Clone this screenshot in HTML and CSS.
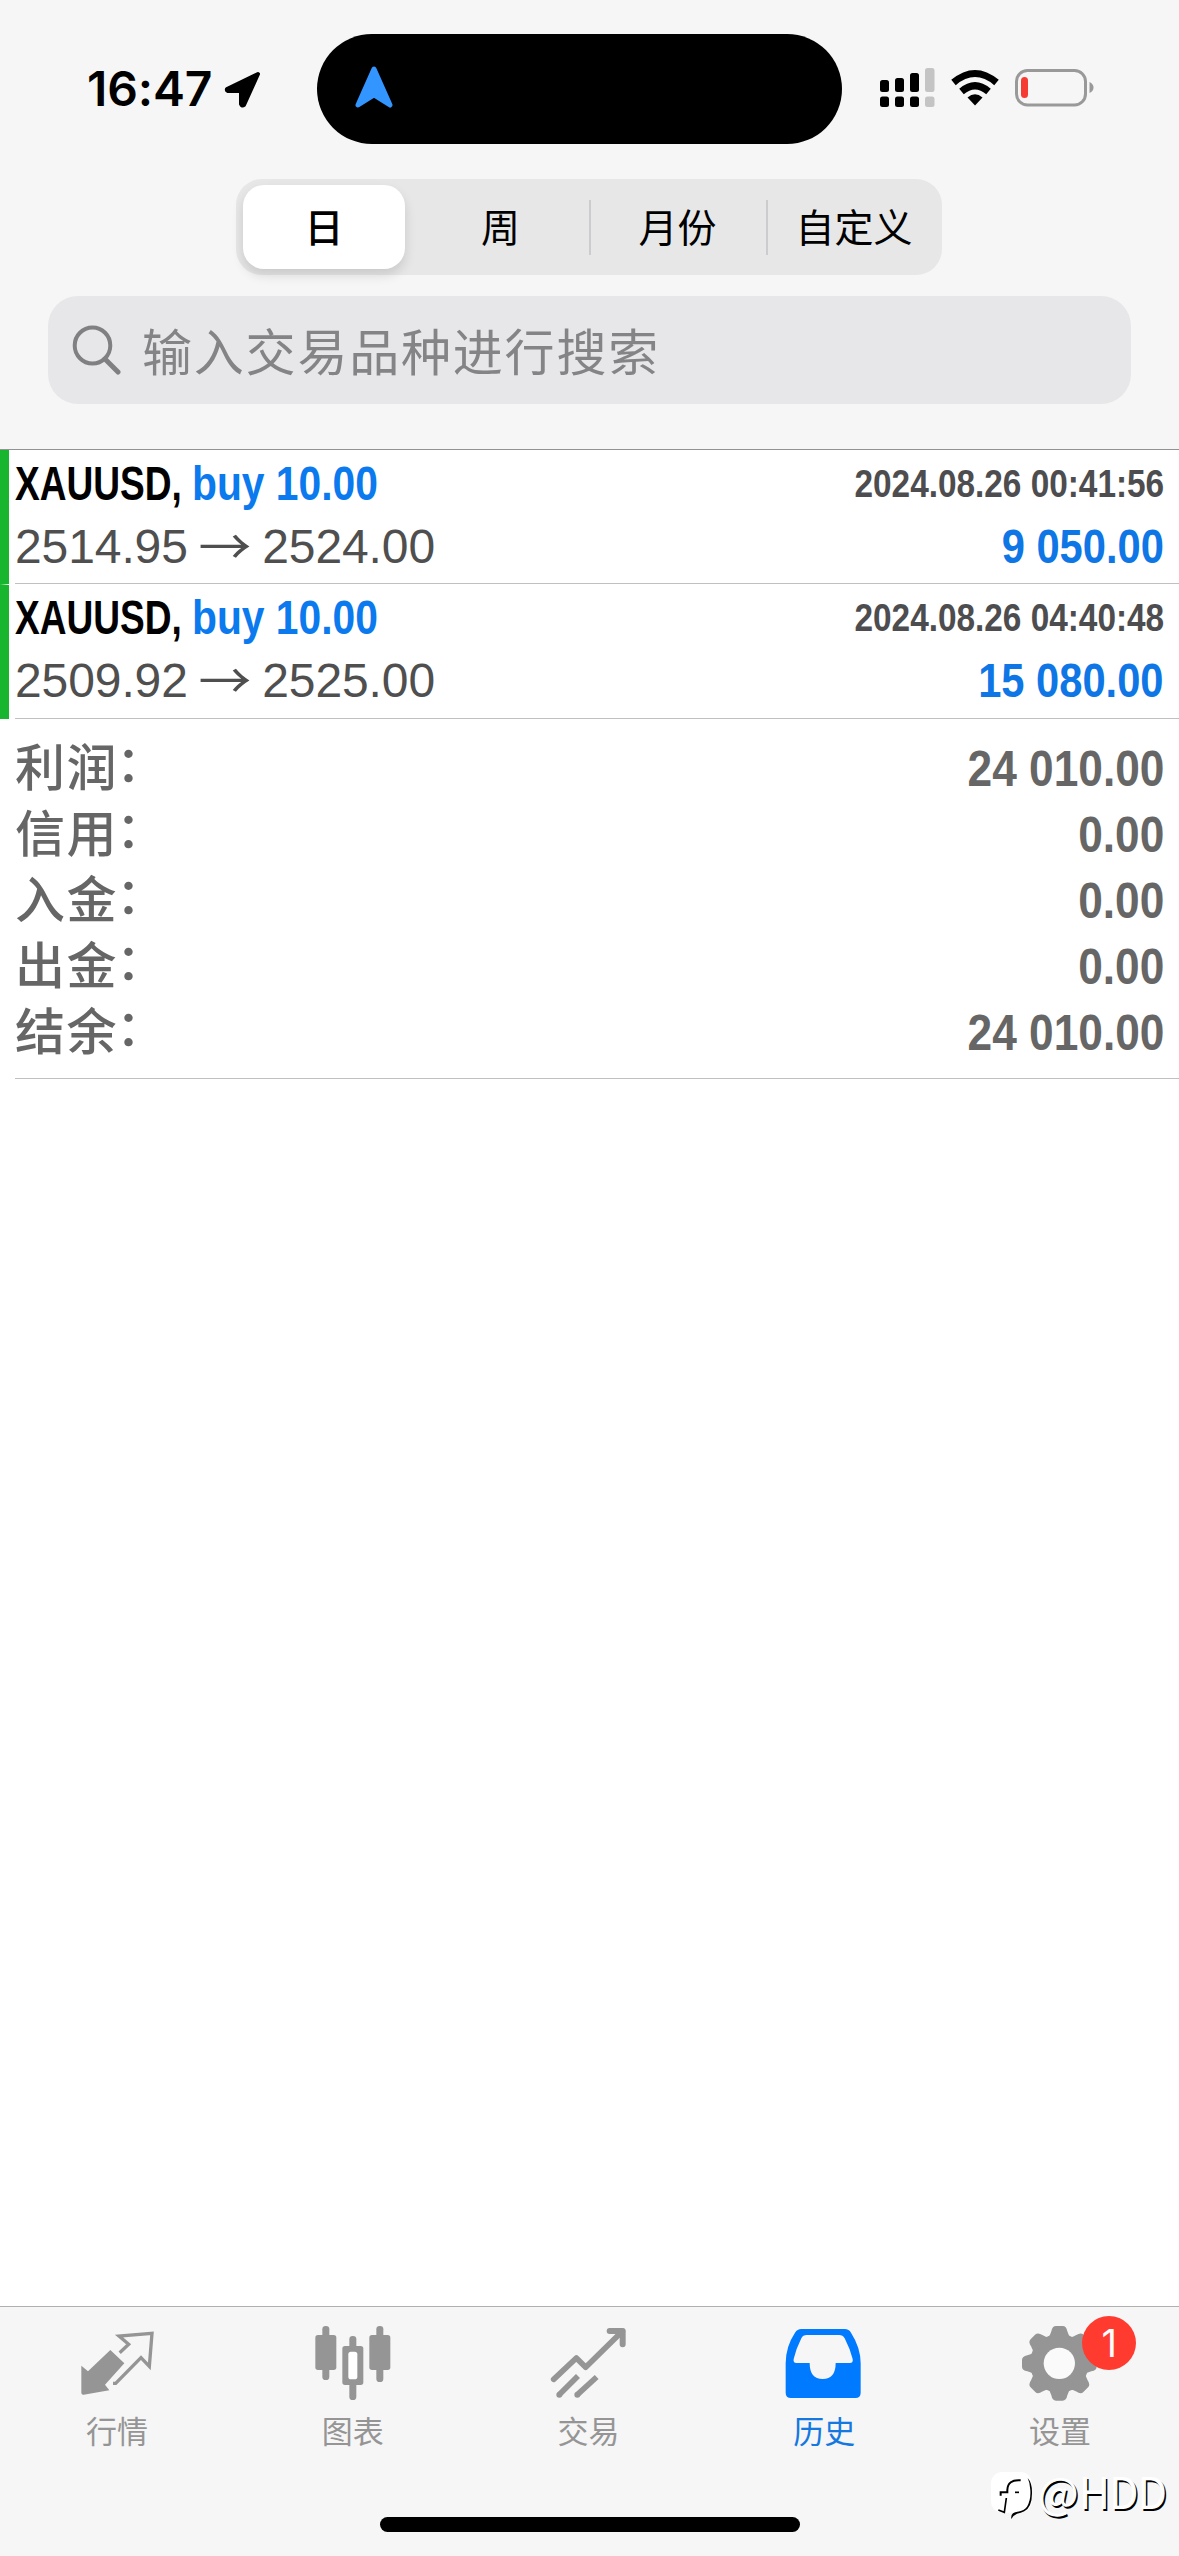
FILE: index.html
```html
<!DOCTYPE html>
<html lang="zh-CN">
<head>
<meta charset="utf-8">
<title>历史</title>
<link rel="stylesheet" href="styles.css">
</head>
<body>
<div class="screen">
  <header class="header">
    <div class="status">
      <div class="status-left">
        <span class="time">16:47</span>
        <svg class="loc" viewBox="0 0 37 37"><path d="M34 3 L3 18 Q2.500 19.500 4 20 H17 V33 Q18 35.500 20 34 Z" fill="#000" stroke="#000" stroke-width="4" stroke-linejoin="round"/></svg>
      </div>
      <div class="island">
        <svg class="nav" viewBox="0 0 38 42"><path d="M19 3 L3 39 L19 29 L35 39 Z" fill="#3395ff" stroke="#3395ff" stroke-width="5" stroke-linejoin="round"/></svg>
      </div>
      <svg class="status-right" width="216" height="44" viewBox="879 66 216 44">
        <g fill="#000">
          <rect x="880" y="80" width="9" height="12" rx="2.500"/><rect x="895" y="78" width="9" height="14" rx="2.500"/><rect x="910" y="73" width="9" height="19" rx="2.500"/>
          <rect x="880" y="96.500" width="9" height="10.500" rx="2.500"/><rect x="895" y="96.500" width="9" height="10.500" rx="2.500"/><rect x="910" y="96.500" width="9" height="10.500" rx="2.500"/>
        </g>
        <g fill="#c4c4c4"><rect x="925" y="68" width="9.500" height="24" rx="2.500"/><rect x="925" y="96.500" width="9.500" height="10.500" rx="2.500"/></g>
        <g fill="none" stroke="#000" stroke-width="7"><path d="M953.500 82.500 Q975 64.500 996.500 82.500"/><path d="M961.500 91.500 Q975 80 988.500 91.500"/></g>
        <path d="M967.500 97.500 Q975 91 982.500 97.500 L975 105.500 Z"/>
        <rect x="1016.500" y="70.500" width="69" height="34.500" rx="11" fill="none" stroke="#999" stroke-width="3"/>
        <rect x="1021" y="77" width="7" height="21" rx="3.500" fill="#f63c32"/>
        <path d="M1089.500 82 Q1093.500 84 1093.500 87.500 Q1093.500 91 1089.500 93 Z" fill="#999"/>
      </svg>
    </div>
    <nav class="segments">
      <span class="segment selected">日</span>
      <span class="segment week">周</span>
      <span class="segment ruled">月份</span>
      <span class="segment ruled">自定义</span>
    </nav>
    <div class="search">
      <svg class="glass" viewBox="0 0 50 50"><ellipse cx="20.500" cy="20.500" rx="17.800" ry="18" fill="none" stroke="#808083" stroke-width="4"/><path d="M33 34 L46 47" stroke="#808083" stroke-width="5" stroke-linecap="round"/></svg>
      <span class="placeholder">输入交易品种进行搜索</span>
    </div>
  </header>

  <main class="content">
    <article class="deal">
      <div class="deal-body">
        <div class="line">
          <div class="title"><span class="symbol">XAUUSD,</span><span class="side">buy 10.00</span></div>
          <span class="date">2024.08.26 00:41:56</span>
        </div>
        <div class="line">
          <span class="prices">2514.95 <span class="arrow">→</span> 2524.00</span>
          <span class="profit">9 050.00</span>
        </div>
      </div>
    </article>
    <article class="deal">
      <div class="deal-body">
        <div class="line">
          <div class="title"><span class="symbol">XAUUSD,</span><span class="side">buy 10.00</span></div>
          <span class="date">2024.08.26 04:40:48</span>
        </div>
        <div class="line">
          <span class="prices">2509.92 <span class="arrow">→</span> 2525.00</span>
          <span class="profit">15 080.00</span>
        </div>
      </div>
    </article>
    <section class="summary">
      <div class="total"><span class="label">利润<span class="colon">：</span></span><span class="value">24 010.00</span></div>
      <div class="total"><span class="label">信用<span class="colon">：</span></span><span class="value">0.00</span></div>
      <div class="total"><span class="label">入金<span class="colon">：</span></span><span class="value">0.00</span></div>
      <div class="total"><span class="label">出金<span class="colon">：</span></span><span class="value">0.00</span></div>
      <div class="total"><span class="label">结余<span class="colon">：</span></span><span class="value">24 010.00</span></div>
    </section>
  </main>

  <footer class="footer">
    <nav class="tabs">
      <div class="tab">
        <svg class="icon" viewBox="233 102 240 228"><path d="M330 180 L372 220 L314 284 L327 301 L250 314 Q243 315 243 308 V227 L263 244 Z" fill="#959595"/><path d="M358 188 L385 163 L356 138 L455 130 L447 229 L422 203 L346 280 H338" fill="none" stroke="#959595" stroke-width="10"/></svg>
        <span>行情</span>
      </div>
      <div class="tab">
        <svg class="icon" viewBox="941 102 240 228"><g fill="#959595"><rect x="945" y="135" width="63" height="105" rx="8"/><rect x="966" y="108" width="21" height="162" rx="10"/><rect x="1107" y="135" width="63" height="105" rx="8"/><rect x="1128" y="108" width="21" height="168" rx="10"/><rect x="1026" y="168" width="63" height="117" rx="8"/><rect x="1047" y="138" width="21" height="192" rx="10"/></g><rect x="1044" y="185" width="27" height="83" rx="8" fill="#fff"/></svg>
        <span>图表</span>
      </div>
      <div class="tab">
        <svg class="icon" viewBox="328 102 240 228"><g fill="none" stroke="#959595" stroke-width="17" stroke-linejoin="round"><path d="M342 268 L410 204 L438 232 L548 124" stroke-linecap="round"/><path d="M510 123 H549 V163" stroke-width="18" stroke-linecap="round"/><path d="M415 258 L360 313 M471 261 L414 313"/></g><g fill="#959595"><circle cx="359" cy="314" r="9"/><circle cx="413" cy="314" r="9"/></g></svg>
        <span>交易</span>
      </div>
      <div class="tab active">
        <svg class="icon" viewBox="1036 102 240 228"><path fill="#007aff" fill-rule="evenodd" d="M1085 117 H1215 Q1228 117 1234 128 Q1263 173 1263 220 V308 Q1263 324 1247 324 H1054 Q1038 324 1038 308 V220 Q1038 170 1066 128 Q1073 117 1085 117 Z M1101 135 Q1090 135 1085 145 Q1069 177 1062 207 Q1060 219 1070 219 H1110 Q1110 267 1149 267 Q1188 267 1188 219 H1231 Q1241 219 1239 207 Q1231 176 1215 145 Q1209 135 1199 135 Z"/></svg>
        <span>历史</span>
      </div>
      <div class="tab">
        <svg class="icon" viewBox="426 102 240 228"><g fill="#959595"><circle cx="541" cy="220" r="88"/><g id="teeth"><path id="tooth" d="M504 146 Q514 138 517 124 Q520 108 531 108 H551 Q562 108 565 124 Q568 138 578 146 Z"/><use href="#tooth" transform="rotate(45 541 220)"/><use href="#tooth" transform="rotate(90 541 220)"/><use href="#tooth" transform="rotate(135 541 220)"/></g><use href="#teeth" transform="rotate(180 541 220)"/></g><circle cx="541" cy="220" r="47" fill="#fafafa"/></svg>
        <span>设置</span>
        <b class="badge">1</b>
      </div>
    </nav>
    <div class="home"></div>
    <div class="watermark">
      <svg class="mark" viewBox="330 540 135 150"><rect x="336" y="546" width="122" height="122" rx="34" fill="#fff"/><path d="M446 564 Q459 578 459 606 Q460 650 436 664 Q426 669 414 671 Q402 676 397 687 Q395 676 402 670 Q408 665 416 665 Q436 662 444 650 Q456 630 454 600 Q453 578 446 564 Z" fill="#000"/><path d="M425 571 Q386 568 385 600 V607 H365 V617" fill="none" stroke="#000" stroke-width="6"/><path d="M408 607 H420" stroke="#000" stroke-width="5"/><path d="M382 624 L376 667 L358 660" fill="none" stroke="#000" stroke-width="5"/></svg>
      <span><span class="at">@</span>HDD</span>
    </div>
  </footer>
</div>
</body>
</html>
```
FILE: styles.css
```css
* { box-sizing: border-box; }
body {
  margin: 0;
  background: #fff;
  font-family: "Liberation Sans", "Noto Sans CJK SC", sans-serif;
}
.screen {
  width: 1179px;
  height: 2556px;
  display: flex;
  flex-direction: column;
  overflow: hidden;
}
svg { display: block; flex: none; }

.header {
  height: 450px;
  flex: none;
  background: #f6f6f6;
  border-bottom: 1px solid #929294;
  padding-top: 34px;
}
.status {
  height: 110px;
  display: grid;
  grid-template-columns: 317px 525px 1fr;
}
.status-left { display: flex; align-items: center; padding-left: 87px; }
.time {
  width: 137px;
  font: 600 48px/56px Inter, sans-serif;
  letter-spacing: -0.1px;
}
.loc { width: 37px; height: 37px; }
.island {
  background: #000;
  border-radius: 55px;
  padding: 32px 0 0 38px;
}
.nav { width: 38px; height: 42px; }
.status-right { margin: 32px 0 0 37px; }

.segments {
  width: 706px;
  height: 96px;
  margin: 35px 0 0 236px;
  padding: 6px 0 6px 7px;
  border-radius: 26px;
  background: #e7e7e8;
  display: grid;
  grid-template-columns: 162px 184px 177px 176px;
}
.segment {
  display: flex;
  align-items: center;
  justify-content: center;
  position: relative;
  padding-bottom: 4px;
  font: 400 39px/56px "Noto Sans CJK SC", sans-serif;
}
.segment.week { padding-left: 7px; }
.segment.selected {
  font-weight: 500;
  background: #fff;
  border-radius: 21px;
  box-shadow: 0 6px 12px rgba(0, 0, 0, 0.13);
}
.segment.ruled::before {
  content: "";
  position: absolute;
  left: 0;
  top: 15px;
  width: 2px;
  height: 55px;
  background: #ccccce;
}
.search {
  width: 1083px;
  height: 108px;
  margin: 21px 0 0 48px;
  padding-left: 24px;
  border-radius: 30px;
  background: #e7e7e9;
  display: flex;
  align-items: center;
  gap: 20px;
}
.glass { width: 50px; height: 50px; }
.placeholder {
  padding-bottom: 3px;
  font: 400 50px/72px "Noto Sans CJK SC", sans-serif;
  letter-spacing: 1.8px;
  color: #848486;
}

.content { flex: 1; }
.deal {
  height: 134px;
  padding-left: 6px;
  border-left: 9px solid #18b62f;
}
.deal + .deal {
  height: 135px;
  border-top: 1px solid #fff;
}
.deal-body {
  height: 134px;
  padding: 4px 15px 0 0;
  border-bottom: 1px solid #c0c0c2;
}
.line {
  height: 63px;
  display: flex;
  justify-content: space-between;
  font-size: 48px;
  line-height: 59px;
  white-space: pre;
}
.title { display: flex; font-weight: 700; }
.symbol { width: 177px; transform: scaleX(0.772); transform-origin: left; }
.side { color: #0a7aee; transform: scaleX(0.85); transform-origin: left; }
.date {
  font-size: 39px;
  font-weight: 700;
  color: #4d4d4f;
  transform: scaleX(0.855);
  transform-origin: right;
}
.deal + .deal .line:first-child { height: 62px; line-height: 58px; }
.prices { color: #4f4f4f; letter-spacing: -0.1px; }
.arrow {
  display: inline-block;
  font-family: "Noto Sans CJK SC", sans-serif;
  line-height: 1px;
  transform: translateY(1px) scaleX(1.1);
}
.profit {
  font-weight: 700;
  color: #0f76e6;
  transform: scaleX(0.868);
  transform-origin: right;
}
.summary {
  height: 360px;
  margin-left: 15px;
  padding: 15px 15px 0 0;
  border-bottom: 1px solid #c0c0c2;
}
.total {
  height: 66px;
  display: flex;
  justify-content: space-between;
  align-items: center;
  color: #666;
}
.label {
  padding-bottom: 6px;
  font: 500 50px/66px "Noto Sans CJK SC", sans-serif;
  letter-spacing: 1.5px;
}
.colon { margin-left: -2px; line-height: 0; vertical-align: 4px; }
.value {
  padding-top: 3px;
  font-size: 50px;
  font-weight: 700;
  line-height: 66px;
  transform: scaleX(0.885);
  transform-origin: right;
}

.footer {
  height: 250px;
  flex: none;
  position: relative;
  background: #f6f6f6;
  border-top: 1px solid #b0b0b2;
}
.tabs {
  height: 210px;
  padding-top: 17px;
  display: grid;
  grid-template-columns: repeat(5, 1fr);
}
.tab {
  display: flex;
  flex-direction: column;
  align-items: center;
  gap: 8px;
  position: relative;
  font: 400 31px/44px "Noto Sans CJK SC", sans-serif;
  color: #959595;
}
.tab > span { padding-right: 2px; }
.tab.active { color: #1478e0; }
.icon { width: 80px; height: 76px; overflow: visible; }
.badge {
  position: absolute;
  left: 139px;
  top: -8px;
  width: 54px;
  height: 54px;
  border-radius: 50%;
  background: #ff3b30;
  color: #fff;
  font: 400 38px/54px Inter, sans-serif;
  text-align: center;
}
.home {
  width: 420px;
  height: 15px;
  margin: 0 auto;
  border-radius: 8px;
  background: #000;
}
.watermark {
  position: absolute;
  left: 989px;
  top: 163px;
  display: flex;
  align-items: flex-start;
  gap: 4px;
  color: #fff;
  font: 400 43px/50px "Noto Sans CJK SC", sans-serif;
  letter-spacing: -1px;
  text-shadow: 1.5px 1.5px 0 #000;
}
.watermark > span { margin-top: -5px; }
.at { letter-spacing: 0; }
.mark { width: 45px; height: 50px; }
```
